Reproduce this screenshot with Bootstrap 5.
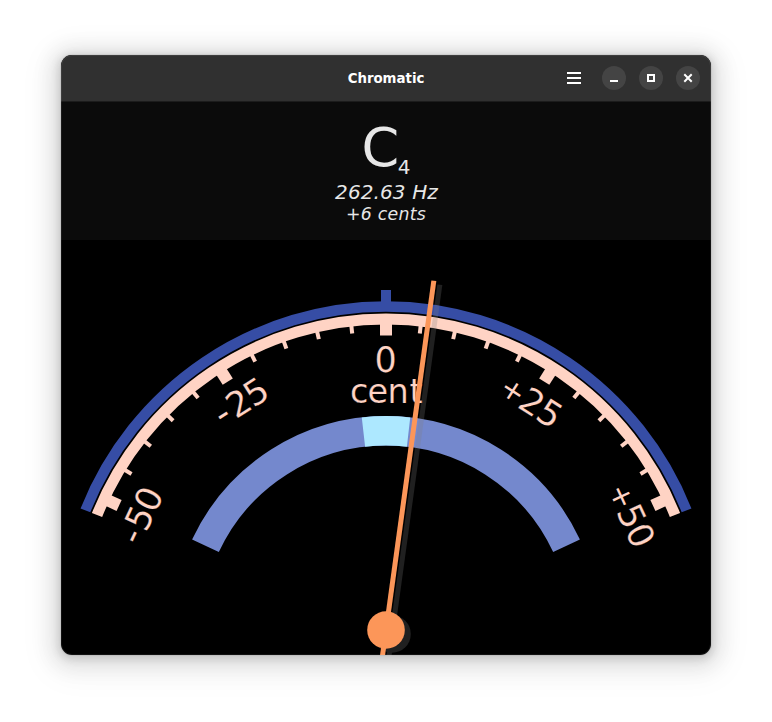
<!DOCTYPE html>
<html lang="en">
<head>
<meta charset="utf-8">
<meta name="viewport" content="width=device-width, initial-scale=1">
<title>Chromatic</title>
<link rel="stylesheet" href="https://cdn.jsdelivr.net/npm/bootstrap@5.3.0/dist/css/bootstrap.min.css">
<style>
body { background: #fff; font-family: "DejaVu Sans", sans-serif; padding: 55px 61px 67px; height: 722px; overflow: hidden; }
.app-window { width: 650px; height: 600px; border-radius: 11px; background: #000; box-shadow: 0 2px 8px 2px rgba(0,0,0,.13), 0 3px 20px 10px rgba(0,0,0,.09), 0 6px 32px 16px rgba(0,0,0,.04), 0 0 0 1px rgba(0,0,0,.05); }
.window-body { border-radius: 11px; }
.edge { border: 1px solid rgba(255,255,255,.07); border-radius: 11px; pointer-events: none; }
.titlebar { display: grid; grid-template-columns: 1fr auto 1fr; height: 47px; background: #303030; border-bottom: 1px solid #1c1c1c; padding: 0 11px; }
.app-title { font-size: 13.333px; font-weight: 700; color: #fff; line-height: 20px; padding-top: 2px; }
.win-btn { width: 24px; height: 24px; border-radius: 50%; background: #444; border: 0; padding: 0; }
.win-btn + .win-btn { margin-left: 13px; }
.menu-btn { width: 14px; height: 14px; border: 0; padding: 0; background: none; margin-right: 21px; }
.note-panel { height: 138px; background: #0b0b0b; color: #e7e7e7; padding-top: 16px; }
.note-name { font-size: 54px; line-height: 60px; height: 62px; }
.octave { font-size: 20px; line-height: 24px; margin-bottom: 1px; margin-left: -1.5px; }
.freq { font-size: 20px; line-height: 24px; font-style: italic; letter-spacing: .1px; padding-left: 1px; }
.offset-cents { font-size: 17.333px; line-height: 21px; font-style: italic; letter-spacing: .25px; }
.gauge text { font-family: "DejaVu Sans", sans-serif; font-size: 35px; fill: #ffd3c4; stroke: #000; stroke-width: .2px; text-anchor: middle; }
.gauge .unit { font-size: 33.5px; text-anchor: start; }
.gauge .plus { font-size: 28.5px; stroke: none; }
.gauge .minus { font-size: 37px; }
</style>
<script src="https://cdn.jsdelivr.net/npm/bootstrap@5.3.0/dist/js/bootstrap.bundle.min.js"></script>
</head>
<body>
<main class="app-window position-relative">
  <div class="window-body d-flex flex-column overflow-hidden">
    <header class="titlebar align-items-center">
      <span></span>
      <h1 class="app-title m-0">Chromatic</h1>
      <div class="d-flex align-items-center justify-content-end">
        <button class="menu-btn d-flex" aria-label="Menu"><svg width="14" height="14"><path d="M0 2h14M0 7h14M0 12h14" stroke="#fff" stroke-width="2" shape-rendering="crispEdges"/></svg></button>
        <button class="win-btn d-flex" aria-label="Minimize"><svg width="24" height="24"><path d="M8 15h8" stroke="#fff" stroke-width="2"/></svg></button>
        <button class="win-btn d-flex" aria-label="Maximize"><svg width="24" height="24"><path d="M9 9h6v6h-6z" fill="none" stroke="#fff" stroke-width="2"/></svg></button>
        <button class="win-btn d-flex" aria-label="Close"><svg width="24" height="24"><path d="M9 9l6 6M15 9l-6 6" stroke="#fff" stroke-width="2" stroke-linecap="square"/></svg></button>
      </div>
    </header>
    <section class="note-panel d-flex flex-column align-items-center">
      <div class="d-flex align-items-end"><span class="note-name">C</span><span class="octave">4</span></div>
      <div class="freq">262.63 Hz</div>
      <div class="offset-cents">+6 cents</div>
    </section>
    <svg class="gauge d-block" width="650" height="415" viewBox="61 240 650 415">
      <g id="dial" fill="none"></g>
      <g transform="translate(386 630)">
        <text x="-.4" y="-258.5">0</text>
        <text class="unit" x="-36 -18.6 1.6 23.6" y="-227.4">cent</text>
        <text transform="rotate(-65)" x="-22 -2.6 18.4" y="-258.3"><tspan class="minus">-</tspan>50</text>
        <text transform="rotate(-32.5)" x="-22 -2.6 18.4" y="-258.3"><tspan class="minus">-</tspan>25</text>
        <text transform="rotate(32.5)" x="-21.5 .6 21.8" y="-260.6 -258.3 -258.3"><tspan class="plus">+</tspan>25</text>
        <text transform="rotate(65)" x="-21.5 .6 21.8" y="-260.6 -258.3 -258.3"><tspan class="plus">+</tspan>50</text>
        <g transform="translate(6 4)" opacity=".25" fill="#808080" stroke="#808080">
          <path d="M0 60V-352.5" stroke-width="5" transform="rotate(7.8)"/><circle r="18.8" stroke="none"/>
        </g>
        <path d="M0 60V-352.5" stroke="#fc9659" stroke-width="5" transform="rotate(7.8)"/>
        <circle r="18.8" fill="#fc9659"/>
      </g>
    </svg>
  </div>
  <div class="edge position-absolute top-0 start-0 w-100 h-100"></div>
</main>
<script>
const cx = 386, cy = 630, dial = document.getElementById('dial');
const at = (r, deg) => { const a = deg * Math.PI / 180; return (cx + r * Math.sin(a)).toFixed(3) + ' ' + (cy - r * Math.cos(a)).toFixed(3); };
function stroke(d, color, width) {
  const p = document.createElementNS('http://www.w3.org/2000/svg', 'path');
  p.setAttribute('d', d); p.setAttribute('stroke', color); p.setAttribute('stroke-width', width);
  dial.appendChild(p);
}
const arc = (r, a, b, color, w) => stroke(`M${at(r, a)}A${r} ${r} 0 0 1 ${at(r, b)}`, color, w);
const tick = (r1, r2, a, color, w) => stroke(`M${at(r1, a)}L${at(r2, a)}`, color, w);
arc(323.5, -68.3, 68.3, '#364da5', 10.5);
tick(340, 327, 0, '#364da5', 10);
arc(311, -68.3, 68.3, '#ffd3c4', 11);
for (let c = -50; c <= 50; c += 5) {
  const major = c % 25 === 0;
  tick(308, major ? 294.5 : 298.5, c * 1.3, '#ffd3c4', major ? 12 : 4);
}
arc(199.2, -65, 65, '#7488cd', 29.5);
arc(199.2, -6.5, 6.5, '#ade8ff', 29.5);
</script>
</body>
</html>
